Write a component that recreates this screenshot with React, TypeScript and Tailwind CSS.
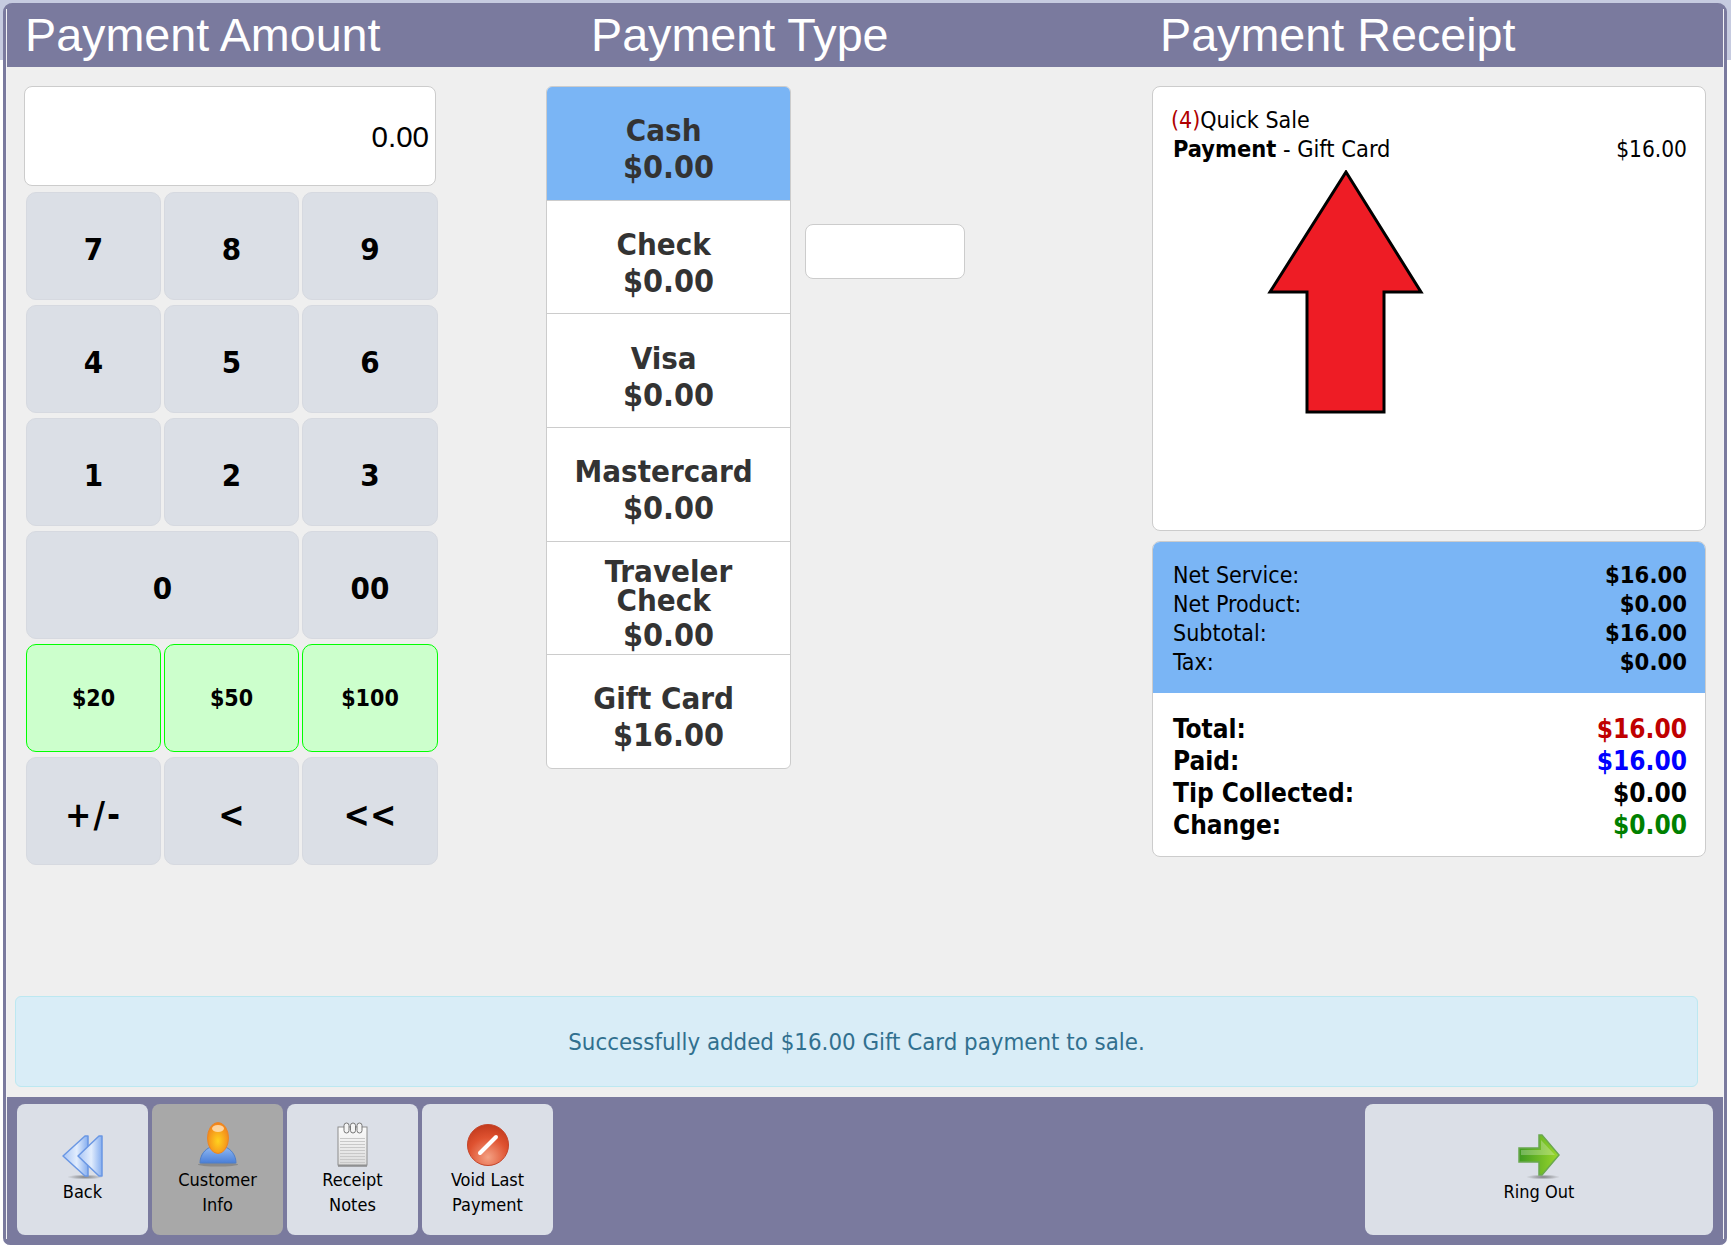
const tahoma = "font-['DejaVu_Sans_Condensed','DejaVu_Sans',sans-serif]";

type PayType = { name: string[]; amount: string; active?: boolean; tight?: boolean };

const payTypes: PayType[] = [
  { name: ['Cash\u00a0'], amount: '$0.00', active: true },
  { name: ['Check\u00a0'], amount: '$0.00' },
  { name: ['Visa\u00a0'], amount: '$0.00' },
  { name: ['Mastercard\u00a0'], amount: '$0.00' },
  { name: ['Traveler', 'Check\u00a0'], amount: '$0.00', tight: true },
  { name: ['Gift Card\u00a0'], amount: '$16.00' },
];

function Key({ label, wide, green, size = 'text-[31px]', shift = 'mt-[6px]' }: { label: string; wide?: boolean; green?: boolean; size?: string; shift?: string }) {
  return (
    <button
      className={`${wide ? 'col-span-2' : ''} flex items-center justify-center rounded-[10px] border font-bold text-black ${size} ${
        green ? 'bg-[#ccffcc] border-[#00ff00]' : 'bg-[#dbdfe6] border-[#d6d9e0]'
      }`}
    >
      <span className={shift}>{label}</span>
    </button>
  );
}

function Keypad() {
  return (
    <div className="mt-[6px] ml-[2px] grid w-[412px] grid-cols-[135px_135px_136px] auto-rows-[108px] gap-x-[3px] gap-y-[5px]">
      <Key label="7" />
      <Key label="8" />
      <Key label="9" />
      <Key label="4" />
      <Key label="5" />
      <Key label="6" />
      <Key label="1" />
      <Key label="2" />
      <Key label="3" />
      <Key label="0" wide />
      <Key label="00" />
      <Key label="$20" green size="text-[23px]" shift="mt-px" />
      <Key label="$50" green size="text-[23px]" shift="mt-px" />
      <Key label="$100" green size="text-[23px]" shift="mt-px" />
      <Key label="+/-" size="text-[35px] tracking-[2px]" shift="mt-[8px]" />
      <Key label="<" size="text-[35px]" shift="mt-[8px]" />
      <Key label="<<" size="text-[35px]" shift="mt-[8px]" />
    </div>
  );
}

function PayTypeList() {
  return (
    <div className="-ml-px w-[245px] overflow-hidden rounded-[6px] border border-[#cccccc] bg-white">
      {payTypes.map((t, i) => (
        <div
          key={i}
          className={`flex flex-col items-center justify-center text-center text-[31px] font-bold text-[#333333] ${
            i > 0 ? 'h-[113.7px] border-t border-[#cccccc]' : 'h-[112.5px]'
          } ${i === 5 ? 'pt-[10px]' : 'pt-[12px]'} ${t.active ? 'bg-[#7ab5f5]' : ''}`}
        >
          {t.name.map((n) => (
            <div key={n} className="leading-[29px] whitespace-pre">
              {n}
            </div>
          ))}
          <div className={`text-[32px] leading-[29px] ${t.tight ? 'mt-[6px]' : 'mt-2'}`}>{t.amount}</div>
        </div>
      ))}
    </div>
  );
}

function Row({ label, value, labelBold, valueClass = 'text-black' }: { label: string; value: string; labelBold?: boolean; valueClass?: string }) {
  return (
    <div className="flex justify-between">
      <span className={labelBold ? 'font-bold' : ''}>{label}</span>
      <span className={`font-bold ${valueClass}`}>{value}</span>
    </div>
  );
}

function ReceiptPanel() {
  return (
    <div className="w-[554px]">
      <div className="relative h-[445px] rounded-[8px] border border-[#cccccc] bg-white pt-[19px] pr-[18px] pl-5 text-[23px] leading-[29px] text-black">
        <div className="-ml-[2px]">
          <span className="text-[#b00000]">(4)</span>Quick Sale
        </div>
        <div className="flex justify-between">
          <span className="text-[23.4px]">
            <b>Payment</b> - Gift Card
          </span>
          <span className="text-[22.5px]">$16.00</span>
        </div>
        {/* red arrow pasted over the receipt */}
        <svg className="absolute left-[114px] top-[83px]" width="158" height="246" viewBox="0 0 158 246">
          <path d="M79 2 L154 122 L117 122 L117 242 L40 242 L40 122 L3 122 Z" fill="#ee1c25" stroke="#000" strokeWidth="3" />
        </svg>
      </div>
      <div className="mt-[10px] overflow-hidden rounded-[8px] border border-[#cccccc] bg-white text-black">
        <div className="bg-[#7ab5f5] pt-[19px] pr-[18px] pb-[16px] pl-5 text-[23px] leading-[29px]">
          <Row label="Net Service:" value="$16.00" valueClass="text-black text-[23.6px]" />
          <Row label="Net Product:" value="$0.00" valueClass="text-black text-[23.6px]" />
          <Row label="Subtotal:" value="$16.00" valueClass="text-black text-[23.6px]" />
          <Row label="Tax:" value="$0.00" valueClass="text-black text-[23.6px]" />
        </div>
        <div className="pt-[20px] pr-[18px] pb-[15px] pl-5 text-[26px] leading-[32px]">
          <Row label="Total:" value="$16.00" labelBold valueClass="text-[#c00000]" />
          <Row label="Paid:" value="$16.00" labelBold valueClass="text-[#0000ff]" />
          <Row label="Tip Collected:" value="$0.00" labelBold />
          <Row label="Change:" value="$0.00" labelBold valueClass="text-[#008000]" />
        </div>
      </div>
    </div>
  );
}

function BackIcon() {
  return (
    <svg width="44" height="46" viewBox="0 0 44 46">
      <defs>
        <linearGradient id="bk" x1="0" y1="0" x2="1" y2="0">
          <stop offset="0" stopColor="#a9c5f5" />
          <stop offset="0.55" stopColor="#e2edfd" />
          <stop offset="1" stopColor="#86aeef" />
        </linearGradient>
        <radialGradient id="sh1">
          <stop offset="0" stopColor="#555" stopOpacity="0.7" />
          <stop offset="1" stopColor="#555" stopOpacity="0" />
        </radialGradient>
      </defs>
      <ellipse cx="24" cy="43" rx="18" ry="2.5" fill="url(#sh1)" />
      <path d="M2 22 L24 2 H27 V42 H24 Z" fill="url(#bk)" stroke="#6a97e4" strokeWidth="1.5" strokeLinejoin="round" />
      <path d="M17 22 L38 2 H41 V42 H38 Z" fill="url(#bk)" stroke="#6a97e4" strokeWidth="1.5" strokeLinejoin="round" />
    </svg>
  );
}

function CustomerIcon() {
  return (
    <svg width="42" height="46" viewBox="0 0 42 46">
      <defs>
        <radialGradient id="head" cx="0.5" cy="0.6" r="0.6">
          <stop offset="0" stopColor="#ffd21e" />
          <stop offset="1" stopColor="#f2811a" />
        </radialGradient>
        <linearGradient id="body" x1="0" y1="0" x2="0" y2="1">
          <stop offset="0" stopColor="#8fb8f2" />
          <stop offset="1" stopColor="#4a7fd8" />
        </linearGradient>
      </defs>
      <ellipse cx="21" cy="42.5" rx="20" ry="2" fill="#777" opacity="0.6" />
      <path d="M3 41 C3 33 8 27 14 25 H28 C34 27 39 33 39 41 Z" fill="url(#body)" stroke="#4f7fc8" />
      <ellipse cx="21" cy="16" rx="10.5" ry="15.5" fill="url(#head)" stroke="#e8862a" />
      <ellipse cx="21" cy="6.5" rx="6" ry="3.5" fill="#ffe3c0" opacity="0.8" />
    </svg>
  );
}

function NotesIcon() {
  return (
    <svg width="34" height="46" viewBox="0 0 34 46">
      <defs>
        <linearGradient id="pad" x1="0" y1="0" x2="0" y2="1">
          <stop offset="0" stopColor="#fbfbfb" />
          <stop offset="1" stopColor="#dcdcdc" />
        </linearGradient>
      </defs>
      <rect x="2" y="5" width="29" height="38" fill="url(#pad)" stroke="#8e8e8e" />
      <rect x="2" y="43" width="29" height="2" fill="#777" opacity="0.6" />
      {[16, 19, 22, 25, 28, 31, 34, 37, 40].map((y) => (
        <rect key={y} x="4" y={y} width="25" height="1" fill="#c8c8c8" />
      ))}
      {[8, 14.5, 21].map((x) => (
        <rect key={x} x={x} y="1" width="5" height="10" rx="2.5" fill="#f4f4f4" stroke="#777" />
      ))}
    </svg>
  );
}

function VoidIcon() {
  return (
    <svg width="42" height="46" viewBox="0 0 42 46">
      <defs>
        <radialGradient id="vd" cx="0.5" cy="0.8" r="0.8">
          <stop offset="0" stopColor="#f4a184" />
          <stop offset="0.6" stopColor="#df5230" />
          <stop offset="1" stopColor="#c23a1d" />
        </radialGradient>
      </defs>
      <circle cx="21" cy="23" r="20.5" fill="url(#vd)" stroke="#c4452a" />
      <path d="M13 31 L29 15" stroke="#fff" strokeWidth="4" strokeLinecap="round" />
    </svg>
  );
}

function RingOutIcon() {
  return (
    <svg width="44" height="46" viewBox="0 0 44 46">
      <defs>
        <linearGradient id="go" x1="0" y1="0" x2="1" y2="0">
          <stop offset="0" stopColor="#3f9a22" />
          <stop offset="1" stopColor="#9bd82b" />
        </linearGradient>
        <radialGradient id="sh2">
          <stop offset="0" stopColor="#555" stopOpacity="0.7" />
          <stop offset="1" stopColor="#555" stopOpacity="0" />
        </radialGradient>
      </defs>
      <ellipse cx="26" cy="43" rx="17" ry="2.5" fill="url(#sh2)" />
      <path d="M2 14 H22 V1 H25 L42 21 L25 41 H22 V28 H2 Z" fill="url(#go)" stroke="#6aa84f" strokeWidth="1.5" />
      <path d="M4 16 H24 V6 L38 21 H4 Z" fill="#fff" opacity="0.25" />
    </svg>
  );
}

function FootBtn({ icon, lines, active, wide }: { icon: React.ReactNode; lines: string[]; active?: boolean; wide?: boolean }) {
  const single = lines.length === 1;
  return (
    <button
      className={`flex h-[131px] flex-col items-center rounded-[8px] text-[18px] leading-[25px] text-black ${
        wide ? 'w-[348px]' : 'w-[131px]'
      } ${active ? 'bg-[#a8a8a8]' : 'bg-[#dbdfe7]'} ${single ? 'pt-[30px]' : 'pt-[18px]'}`}
    >
      {icon}
      <div className="-mt-[1px]">
        {lines.map((l) => (
          <div key={l}>{l}</div>
        ))}
      </div>
    </button>
  );
}

export default function App() {
  return (
    <div className={`h-[1248px] w-[1731px] overflow-hidden bg-[linear-gradient(#c6cbe0_60px,#ffffff_60px)] pt-[3px] pl-[3px] pr-[4px] ${tahoma}`}>
      <div className="h-[1242px] rounded-t-[9px] rounded-b-[7px] border-x-[3px] border-[#7a7a9e] bg-[#7a7a9e] py-[6px]">
        <div className="flex h-full flex-col border-x border-[#f2f2f6] bg-[#efefef]">
          {/* title bar */}
          <div className="flex h-[58px] shrink-0 items-center bg-[#7a7a9e] pb-[6px] font-['Liberation_Sans',sans-serif] text-[46.7px] text-white">
            <div className="w-[584px] pl-[18px]">Payment Amount</div>
            <div className="w-[569px]">Payment Type</div>
            <div>Payment Receipt</div>
          </div>

          <div className="flex flex-1 flex-col justify-between">
            <div className="flex pt-[19px]">
              <div className="w-[540px] pl-[17px]">
                <div className="flex h-[100px] w-[412px] items-center justify-end rounded-[8px] border border-[#cccccc] bg-white pt-[3px] pr-[6px] font-['Liberation_Sans',sans-serif] text-[29.5px] text-black">
                  0.00
                </div>
                <Keypad />
              </div>
              <div className="flex w-[605px] items-start">
                <PayTypeList />
                <div className="mt-[138px] ml-[14px] h-[55px] w-[160px] rounded-[8px] border border-[#cccccc] bg-white" />
              </div>
              <ReceiptPanel />
            </div>

            {/* status message */}
            <div className="mb-[10px] ml-[8px] flex h-[91px] w-[1683px] items-center justify-center rounded-[6px] border border-[#bce8f1] bg-[#d9edf7] pt-[2px] text-[23.8px] text-[#31708f]">
              Successfully added $16.00 Gift Card payment to sale.
            </div>
          </div>

          {/* bottom toolbar */}
          <div className="flex h-[142px] shrink-0 items-start justify-between bg-[#7a7a9e] pt-[7px] pr-[10px] pl-[10px]">
            <div className="flex gap-[4px]">
              <FootBtn icon={<BackIcon />} lines={['Back']} />
              <FootBtn icon={<CustomerIcon />} lines={['Customer', 'Info']} active />
              <FootBtn icon={<NotesIcon />} lines={['Receipt', 'Notes']} />
              <FootBtn icon={<VoidIcon />} lines={['Void Last', 'Payment']} />
            </div>
            <FootBtn icon={<RingOutIcon />} lines={['Ring Out']} wide />
          </div>
        </div>
      </div>
    </div>
  );
}
